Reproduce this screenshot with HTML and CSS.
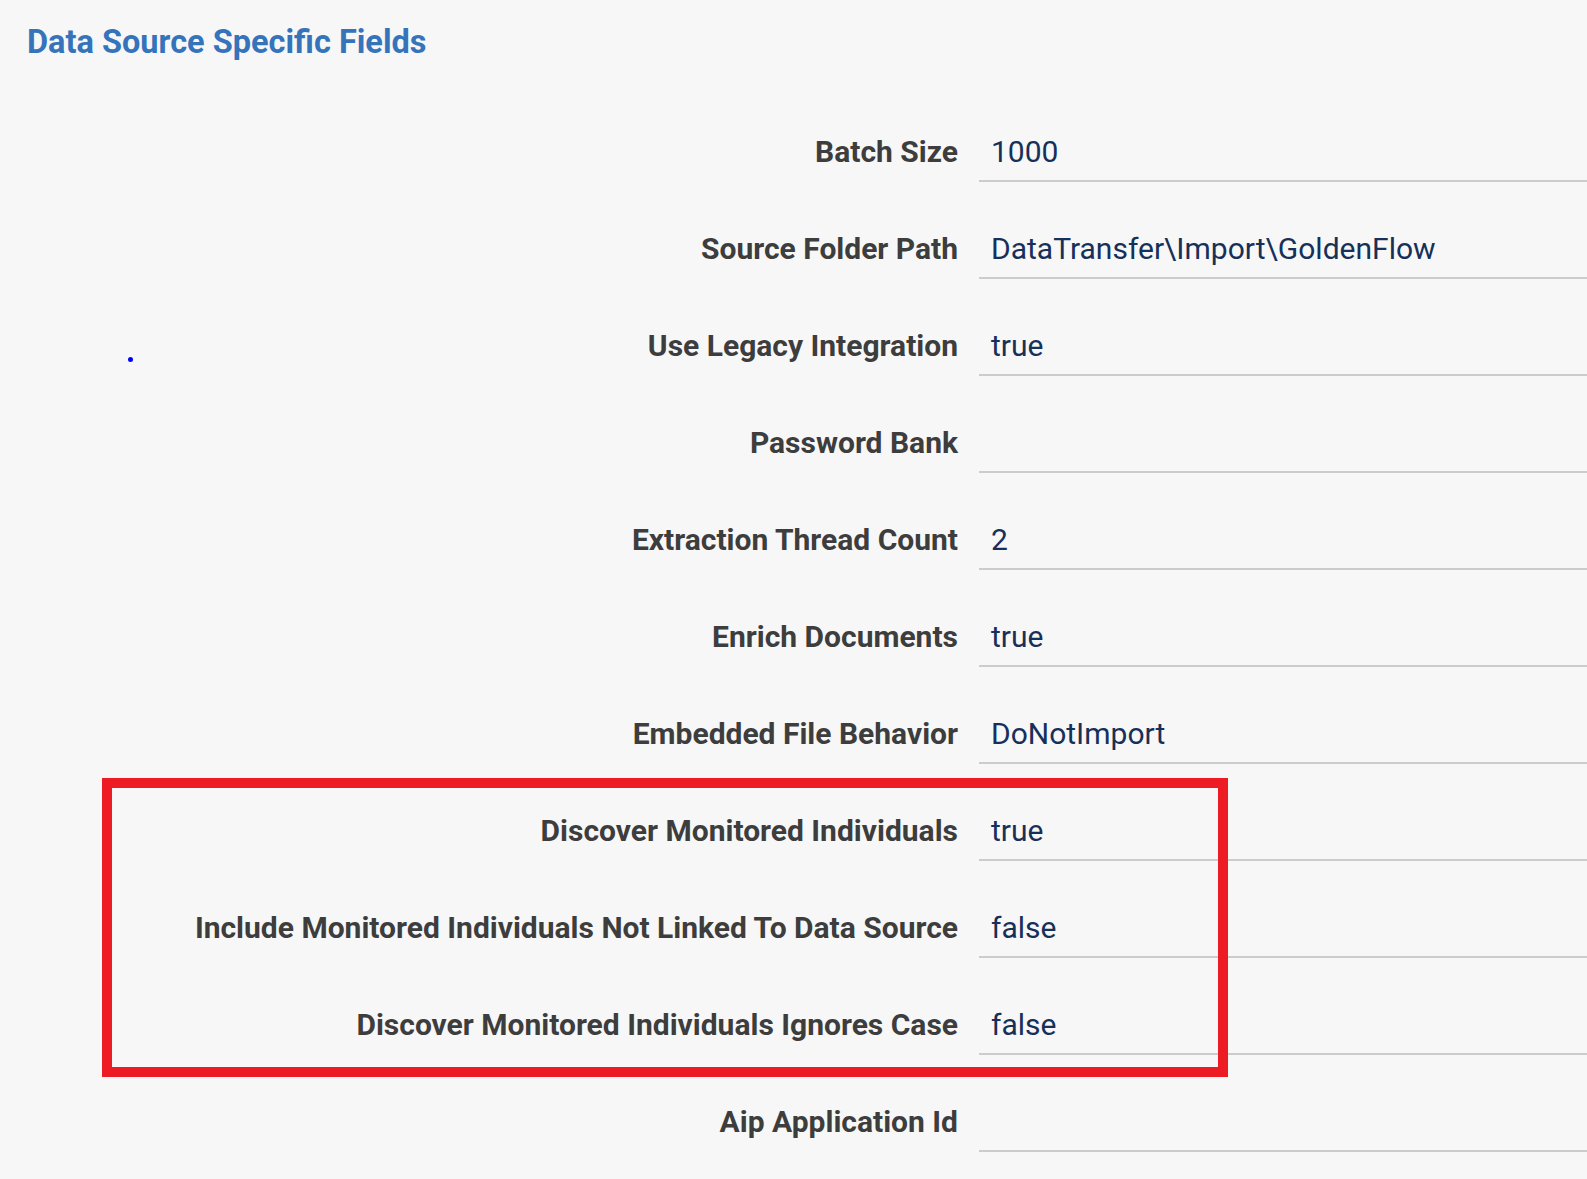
FILE: index.html
```html
<!DOCTYPE html>
<html>
<head>
<meta charset="utf-8">
<link rel="stylesheet" href="styles.css">
</head>
<body>
<div class="page">
  <h1 class="title">Data Source Specific Fields</h1>
  <div class="fields">
    <div class="label">Batch Size</div><div class="value">1000</div>
    <div class="label">Source Folder Path</div><div class="value">DataTransfer\Import\GoldenFlow</div>
    <div class="label">Use Legacy Integration</div><div class="value">true</div>
    <div class="label">Password Bank</div><div class="value"></div>
    <div class="label">Extraction Thread Count</div><div class="value">2</div>
    <div class="label">Enrich Documents</div><div class="value">true</div>
    <div class="label">Embedded File Behavior</div><div class="value">DoNotImport</div>
    <div class="label">Discover Monitored Individuals</div><div class="value">true</div>
    <div class="label">Include Monitored Individuals Not Linked To Data Source</div><div class="value">false</div>
    <div class="label">Discover Monitored Individuals Ignores Case</div><div class="value">false</div>
    <div class="label">Aip Application Id</div><div class="value"></div>
  </div>
  <div class="dot"></div>
  <div class="highlight"></div>
</div>
</body>
</html>
```
FILE: styles.css
```css
html, body {
  margin: 0;
  padding: 0;
  background: #f7f7f7;
}
.page {
  position: relative;
  width: 1587px;
  height: 1179px;
  overflow: hidden;
  font-family: Roboto, "Liberation Sans", sans-serif;
}
.title {
  margin: 0;
  padding: 22px 0 0 27px;
  font-size: 32.5px;
  font-weight: 700;
  color: #3574bb;
  line-height: 40px;
}
.fields {
  display: grid;
  grid-template-columns: 958px 1fr;
  column-gap: 21px;
  grid-auto-rows: 97px;
  margin-top: 23px;
}
.label {
  text-align: right;
  font-weight: 700;
  font-size: 30px;
  color: #3d3d3d;
  display: flex;
  align-items: flex-end;
  justify-content: flex-end;
  padding-bottom: 13px;
}
.value {
  border-bottom: 2px solid #cccccc;
  font-size: 30px;
  color: #16305a;
  padding-left: 12px;
  display: flex;
  align-items: flex-end;
  padding-bottom: 11px;
}
.dot {
  position: absolute;
  left: 128px;
  top: 357px;
  width: 5px;
  height: 5px;
  border-radius: 50%;
  background: #0000ff;
}
.highlight {
  position: absolute;
  left: 102px;
  top: 778px;
  width: 1106px;
  height: 279px;
  border: 10px solid #ed1c24;
}
```
